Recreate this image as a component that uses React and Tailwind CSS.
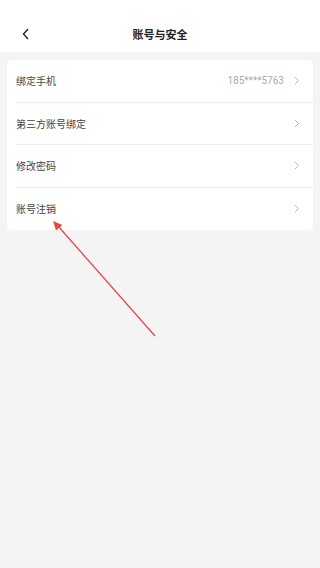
import React from "react";

const rows = [
  { label: "绑定手机", value: "185****5763" },
  { label: "第三方账号绑定" },
  { label: "修改密码" },
  { label: "账号注销" },
];

function Chevron() {
  return (
    <svg width="6" height="9" viewBox="0 0 6 9" className="shrink-0">
      <path d="M1 1l3.5 3.5L1 8" fill="none" stroke="#b8b8b8" strokeWidth="1" />
    </svg>
  );
}

export default function App() {
  return (
    <div
      className="relative w-[320px] h-[568px] bg-[#f4f4f4] overflow-hidden"
      style={{ fontFamily: '"Noto Sans CJK SC", "Noto Sans", sans-serif' }}
    >
      <div className="h-[52px] bg-white flex items-center pt-[16px] relative">
        <div className="w-[52px] flex items-center pl-[22px]">
          <svg width="8" height="12" viewBox="0 0 8 12">
            <path d="M6 1L1.5 6L6 11" fill="none" stroke="#222" strokeWidth="1.4" />
          </svg>
        </div>
        <div className="absolute left-0 right-0 top-[16px] bottom-0 flex items-center justify-center pointer-events-none">
          <span className="text-[11px] font-bold text-[#222]">账号与安全</span>
        </div>
      </div>

      <div className="mx-[7px] mt-[8px] bg-white rounded-[5px]">
        {rows.map((row, i) => (
          <div
            key={row.label}
            className={
              "h-[42.5px] ml-[9px] flex items-center pr-[13px] " +
              (i < rows.length - 1 ? "border-b border-[#ededed]" : "")
            }
          >
            <span className="flex-1 text-[10px] text-[#444]">{row.label}</span>
            {row.value && (
              <span className="text-[10px] text-[#aaa] mr-[10px]" style={{ fontFamily: '"Roboto", sans-serif' }}>
                {row.value}
              </span>
            )}
            <Chevron />
          </div>
        ))}
      </div>

      <svg className="absolute left-0 top-0 pointer-events-none" width="320" height="568">
        <line x1="155" y1="336" x2="58" y2="226" stroke="#e8464a" strokeWidth="1.3" />
        <polygon points="53,221 56,230.5 62.5,225" fill="#e8464a" />
      </svg>
    </div>
  );
}
